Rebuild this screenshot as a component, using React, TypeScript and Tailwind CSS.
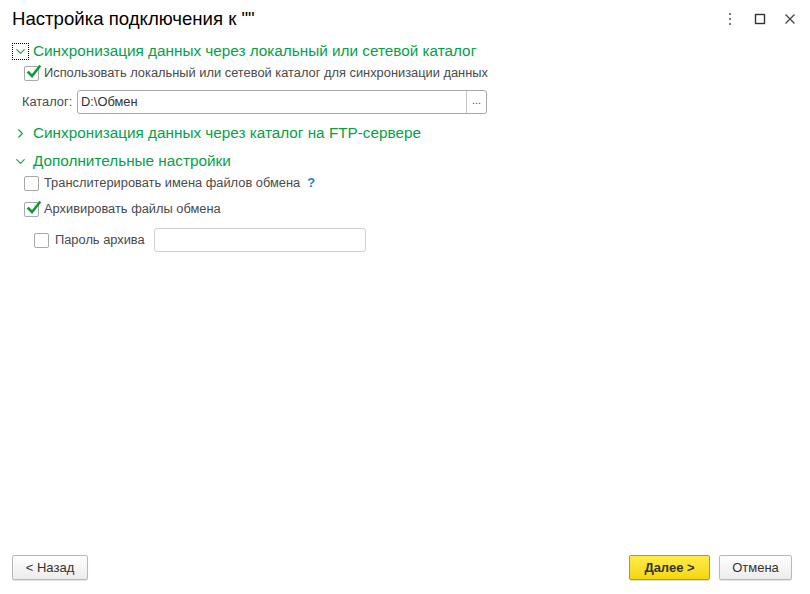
import { ChevronDown, ChevronRight } from 'lucide-react'

function Check({ checked }: { checked?: boolean }) {
  return (
    <span className="relative flex h-[15px] w-[15px] shrink-0 items-center justify-center rounded-[2px] border border-[#a8a8a8] bg-white">
      {checked && (
        <svg viewBox="0 0 16 16" className="absolute -top-[3px] left-[1px] h-[16px] w-[16px]">
          <path d="M2.5 8.5 L6 12 L13.5 2.5" fill="none" stroke="#109a3c" strokeWidth="2.6" strokeLinecap="square" />
        </svg>
      )}
    </span>
  )
}

function GroupTitle({ open, focused, children }: { open?: boolean; focused?: boolean; children: React.ReactNode }) {
  return (
    <div className="flex h-[22px] items-center">
      <span
        className={
          'mr-[4px] flex h-[17px] w-[17px] items-center justify-center ' +
          (focused ? 'border border-dotted border-black' : '')
        }
      >
        {open ? (
          <ChevronDown className="h-[15px] w-[15px] text-[#12a04a]" strokeWidth={1.8} />
        ) : (
          <ChevronRight className="h-[15px] w-[15px] text-[#12a04a]" strokeWidth={1.8} />
        )}
      </span>
      <span className="text-[15.3px] text-[#05a04a]">{children}</span>
    </div>
  )
}

export default function App() {
  return (
    <div className="flex h-[594px] w-[810px] flex-col bg-white font-['Liberation_Sans',Arial,sans-serif] text-[#4a4a4a]">
      {/* Header */}
      <div className="flex h-[37px] items-center justify-between pl-[12px] pr-[14px]">
        <h1 className="text-[18.6px] text-black">Настройка подключения к ""</h1>
        <div className="flex items-center gap-[18px] pt-[1px]">
          <svg width="12" height="14" viewBox="0 0 12 14">
            <rect x="5" y="1" width="2" height="2" fill="#777" />
            <rect x="5" y="6" width="2" height="2" fill="#777" />
            <rect x="5" y="11" width="2" height="2" fill="#777" />
          </svg>
          <svg width="12" height="12" viewBox="0 0 12 12">
            <rect x="1.5" y="1.5" width="9" height="9" fill="none" stroke="#333" strokeWidth="1.4" />
          </svg>
          <svg width="12" height="12" viewBox="0 0 12 12">
            <path d="M1.5 1.5 L10.5 10.5 M10.5 1.5 L1.5 10.5" stroke="#444" strokeWidth="1.3" />
          </svg>
        </div>
      </div>

      {/* Content */}
      <div className="flex flex-1 flex-col pl-[12px] pt-[3px]">
        <GroupTitle open focused>
          Синхронизация данных через локальный или сетевой каталог
        </GroupTitle>
        <div className="mt-[3px] flex h-[16px] items-center gap-[5px] pl-[12px] text-[12.85px]">
          <Check checked />
          <span>Использовать локальный или сетевой каталог для синхронизации данных</span>
        </div>
        <div className="mt-[9px] flex items-center pl-[10px] text-[12.85px]">
          <span className="w-[55px]">Каталог:</span>
          <div className="flex h-[24px] w-[410px] items-stretch rounded-[3px] border border-[#a8a8a8]">
            <span className="flex flex-1 items-center pl-[3px] text-[#333]">D:\Обмен</span>
            <span className="flex w-[20px] items-center justify-center border-l border-[#c8c8c8] pb-[4px] text-[11px] text-[#555]">
              ...
            </span>
          </div>
        </div>

        <div className="mt-[8px]">
          <GroupTitle>Синхронизация данных через каталог на FTP-сервере</GroupTitle>
        </div>
        <div className="mt-[6px]">
          <GroupTitle open>Дополнительные настройки</GroupTitle>
        </div>

        <div className="mt-[3px] flex h-[16px] items-center gap-[5px] pl-[12px] text-[12.85px]">
          <Check />
          <span>Транслитерировать имена файлов обмена</span>
          <span className="ml-[2px] font-bold text-[#1b7fd1]">?</span>
        </div>
        <div className="mt-[10px] flex h-[16px] items-center gap-[5px] pl-[12px] text-[12.85px]">
          <Check checked />
          <span>Архивировать файлы обмена</span>
        </div>
        <div className="mt-[11px] flex items-center pl-[22px] text-[12.85px]">
          <Check />
          <span className="ml-[6px] w-[99px]">Пароль архива</span>
          <div className="h-[24px] w-[212px] rounded-[3px] border border-[#d0d0d0]" />
        </div>
      </div>

      {/* Footer */}
      <div className="flex items-center justify-between pb-[14px] pl-[12px] pr-[18px]">
        <button className="h-[25px] w-[76px] rounded-[2px] border border-[#b9b9b9] bg-gradient-to-b from-white to-[#ececec] text-[13px] text-[#333] shadow-[0_1px_1px_rgba(0,0,0,0.12)]">
          &lt; Назад
        </button>
        <div className="flex items-center gap-[9px]">
          <button className="h-[25px] w-[81px] rounded-[2px] border border-[#a79a3c] bg-gradient-to-b from-[#ffec48] to-[#f6d600] text-[13px] font-bold text-[#333] shadow-[0_1px_1px_rgba(0,0,0,0.15)]">
            Далее &gt;
          </button>
          <button className="h-[25px] w-[73px] rounded-[2px] border border-[#b9b9b9] bg-gradient-to-b from-white to-[#ececec] text-[13px] text-[#333] shadow-[0_1px_1px_rgba(0,0,0,0.12)]">
            Отмена
          </button>
        </div>
      </div>
    </div>
  )
}
